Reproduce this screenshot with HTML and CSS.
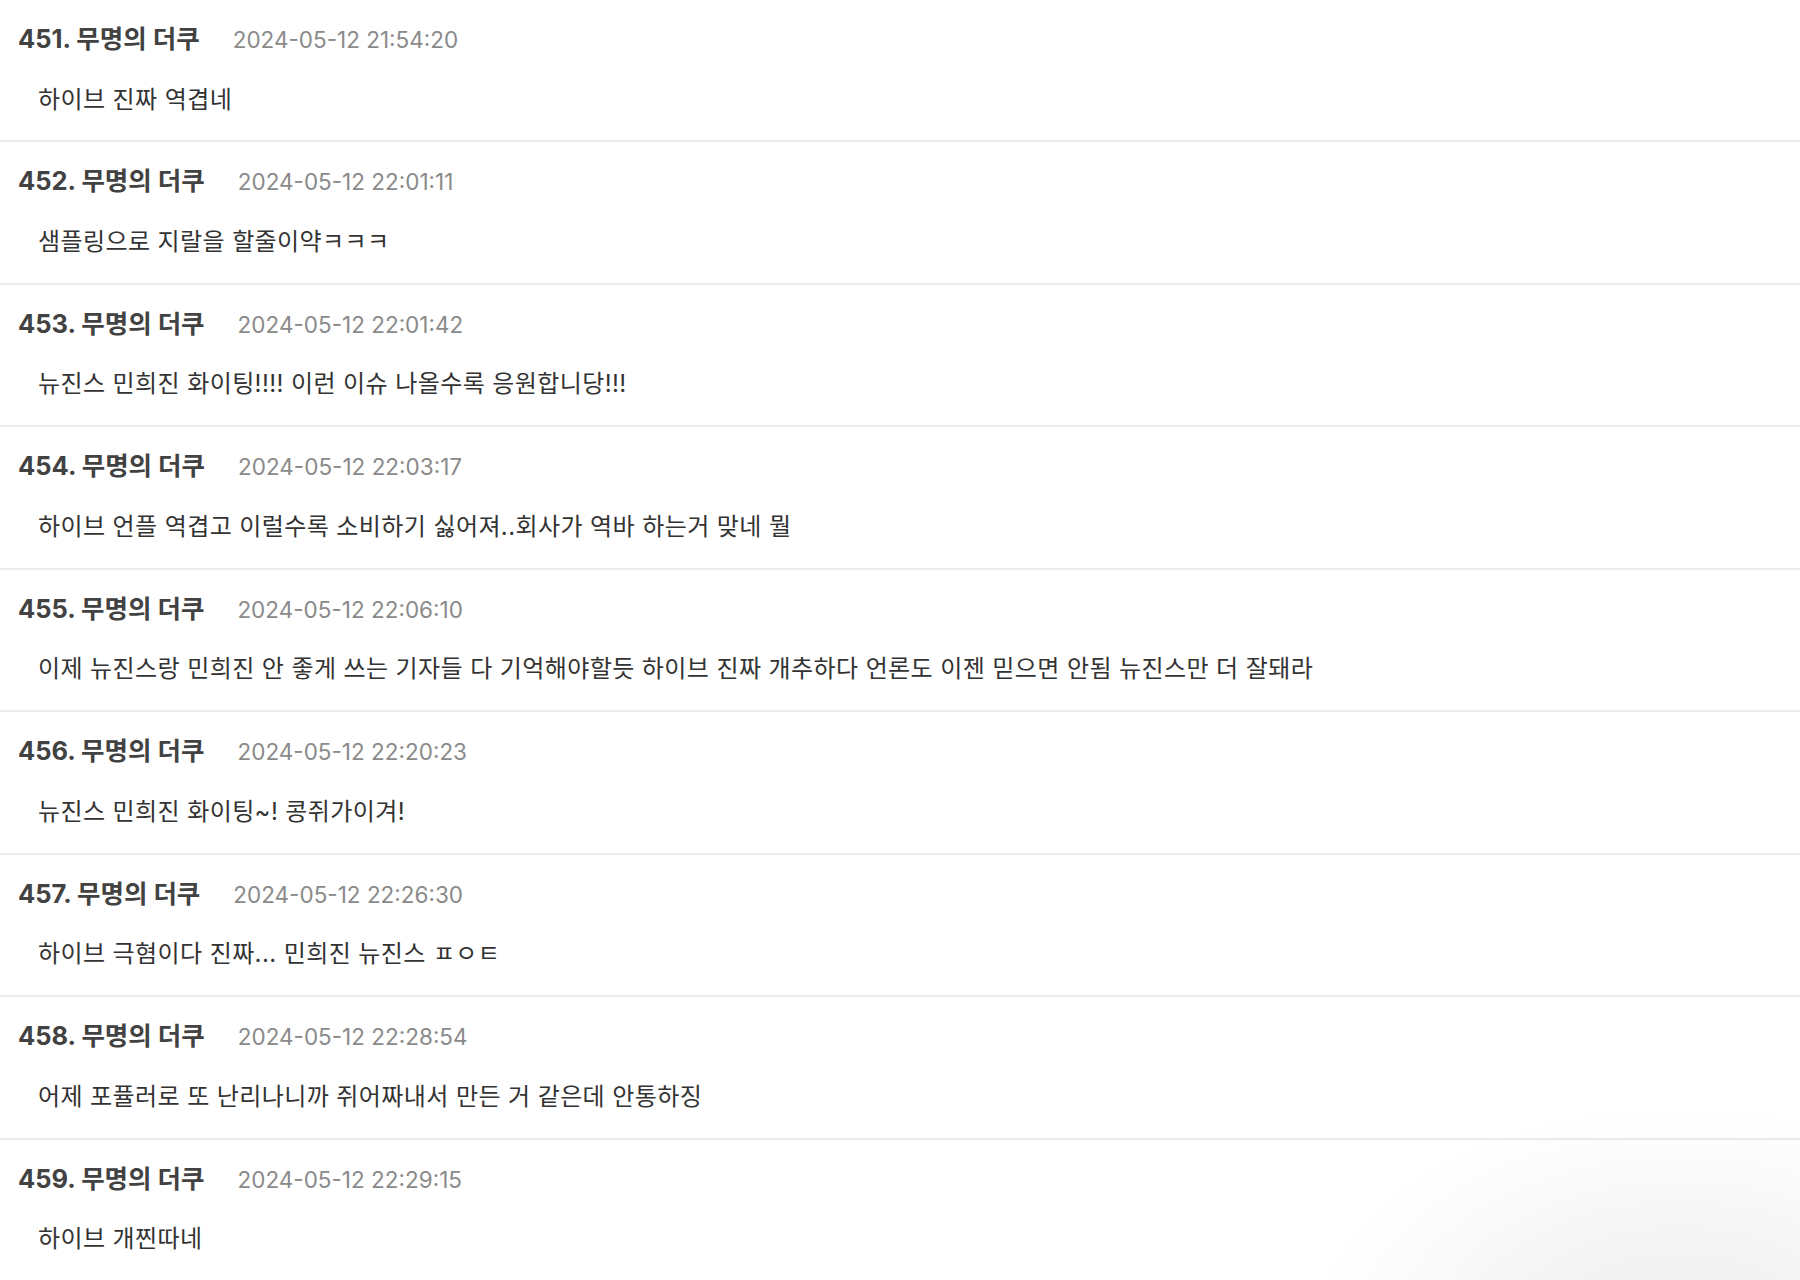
FILE: index.html
```html
<!DOCTYPE html>
<html lang="ko">
<head>
<meta charset="utf-8">
<title>댓글</title>
<link rel="stylesheet" href="styles.css">
</head>
<body>
<ul class="comments">
  <li class="comment">
    <div class="meta"><span class="author">451. 무명의 더쿠</span><span class="date">2024-05-12 21:54:20</span></div>
    <p class="text">하이브 진짜 역겹네</p>
  </li>
  <li class="comment">
    <div class="meta"><span class="author">452. 무명의 더쿠</span><span class="date">2024-05-12 22:01:11</span></div>
    <p class="text">샘플링으로 지랄을 할줄이약ㅋㅋㅋ</p>
  </li>
  <li class="comment">
    <div class="meta"><span class="author">453. 무명의 더쿠</span><span class="date">2024-05-12 22:01:42</span></div>
    <p class="text">뉴진스 민희진 화이팅!!!! 이런 이슈 나올수록 응원합니당!!!</p>
  </li>
  <li class="comment">
    <div class="meta"><span class="author">454. 무명의 더쿠</span><span class="date">2024-05-12 22:03:17</span></div>
    <p class="text">하이브 언플 역겹고 이럴수록 소비하기 싫어져..회사가 역바 하는거 맞네 뭘</p>
  </li>
  <li class="comment">
    <div class="meta"><span class="author">455. 무명의 더쿠</span><span class="date">2024-05-12 22:06:10</span></div>
    <p class="text">이제 뉴진스랑 민희진 안 좋게 쓰는 기자들 다 기억해야할듯 하이브 진짜 개추하다 언론도 이젠 믿으면 안됨 뉴진스만 더 잘돼라</p>
  </li>
  <li class="comment">
    <div class="meta"><span class="author">456. 무명의 더쿠</span><span class="date">2024-05-12 22:20:23</span></div>
    <p class="text">뉴진스 민희진 화이팅~! 콩쥐가이겨!</p>
  </li>
  <li class="comment">
    <div class="meta"><span class="author">457. 무명의 더쿠</span><span class="date">2024-05-12 22:26:30</span></div>
    <p class="text">하이브 극혐이다 진짜... 민희진 뉴진스 ㅍㅇㅌ</p>
  </li>
  <li class="comment">
    <div class="meta"><span class="author">458. 무명의 더쿠</span><span class="date">2024-05-12 22:28:54</span></div>
    <p class="text">어제 포퓰러로 또 난리나니까 쥐어짜내서 만든 거 같은데 안통하징</p>
  </li>
  <li class="comment">
    <div class="meta"><span class="author">459. 무명의 더쿠</span><span class="date">2024-05-12 22:29:15</span></div>
    <p class="text">하이브 개찐따네</p>
  </li>
</ul>
<div class="corner-shadow"></div>
</body>
</html>
```

FILE: styles.css
```css
html, body {
  margin: 0;
  padding: 0;
  background: #ffffff;
}

body {
  font-family: "Inter", "Noto Sans CJK KR", sans-serif;
  color: #333333;
  overflow: hidden;
}

.comments {
  list-style: none;
  margin: 0;
  padding: 0;
}

.comment {
  padding: 21px 0 0 0;
  height: 119.45px;
  border-bottom: 2px solid #ececec;
}

.meta {
  display: flex;
  align-items: baseline;
  height: 36px;
  padding-left: 18px;
  line-height: 36px;
  overflow: hidden;
}

.author {
  font-size: 25.5px;
  font-weight: 700;
  color: #424242;
}

.date {
  margin-left: 33px;
  font-size: 22.5px;
  color: #8a8a8a;
}

.text {
  margin: 24.5px 0 0 0;
  padding-left: 38px;
  height: 36px;
  font-size: 24px;
  letter-spacing: 0.4px;
  line-height: 36px;
  color: #333333;
  white-space: nowrap;
}

.corner-shadow {
  position: fixed;
  right: -260px;
  bottom: -300px;
  width: 760px;
  height: 480px;
  border-radius: 50%;
  background: radial-gradient(ellipse at center, rgba(0,0,0,0.07) 0%, rgba(0,0,0,0.03) 40%, rgba(0,0,0,0) 70%);
  pointer-events: none;
}
```
